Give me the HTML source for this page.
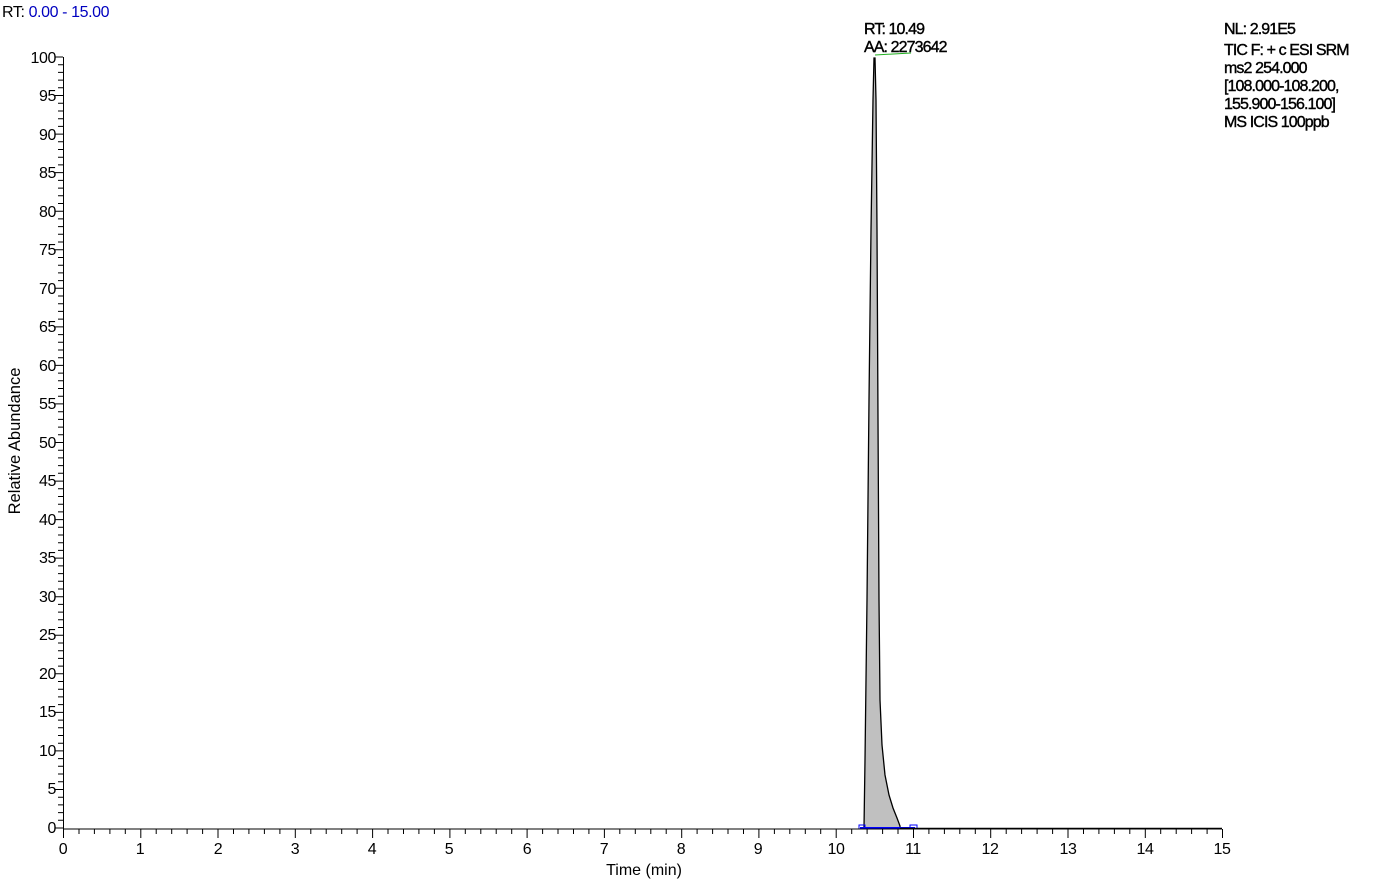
<!DOCTYPE html>
<html><head><meta charset="utf-8"><style>
html,body{margin:0;padding:0;background:#fff;width:1379px;height:886px;overflow:hidden}
svg{display:block}
text{font-family:"Liberation Sans",Arial,sans-serif;font-size:16px;fill:#000}
.c{letter-spacing:-0.4px}
.k{letter-spacing:-0.9px;stroke:#000;stroke-width:0.4px}
</style></head><body>
<svg id="s" width="1379" height="886" viewBox="0 0 1379 886">
<text x="2" y="17" class="c">RT: <tspan fill="#0000c0">0.00 - 15.00</tspan></text>
<text x="864" y="34" class="k">RT: 10.49</text>
<text x="864" y="52" class="k">AA: 2273642</text>
<line x1="875" y1="55" x2="911" y2="53" stroke="#20b020" stroke-width="1"/>
<g class="k">
<text x="1224" y="34">NL: 2.91E5</text>
<text x="1224" y="55">TIC F: + c ESI SRM</text>
<text x="1224" y="73">ms2 254.000</text>
<text x="1224" y="91">[108.000-108.200,</text>
<text x="1224" y="109">155.900-156.100]</text>
<text x="1224" y="127">MS  ICIS 100ppb</text>
</g>
<path d="M864,828 L865,760 L867,600 L869,400 L871,230 L873,100 L874,58 L875,58 L876,100 L877,230 L878,420 L879,600 L880,700 L882,745 L885,775 L889,795 L893,808 L897,818 L900,826 L900,828 Z" fill="#c0c0c0" stroke="#000" stroke-width="1.3"/>
<line x1="860" y1="828" x2="915" y2="828" stroke="#0000ff" stroke-width="2"/>
<rect x="859" y="825" width="6" height="4" fill="none" stroke="#0000ff"/>
<rect x="910" y="825" width="7" height="4" fill="none" stroke="#0000ff"/>
<g id="ax" stroke="#000" stroke-width="1"></g>
<g text-anchor="end" class="c">
<text x="56" y="63">100</text><text x="56" y="101">95</text><text x="56" y="140">90</text><text x="56" y="178">85</text><text x="56" y="217">80</text><text x="56" y="255">75</text><text x="56" y="294">70</text><text x="56" y="332">65</text><text x="56" y="371">60</text><text x="56" y="409">55</text><text x="56" y="448">50</text><text x="56" y="486">45</text><text x="56" y="525">40</text><text x="56" y="563">35</text><text x="56" y="602">30</text><text x="56" y="640">25</text><text x="56" y="679">20</text><text x="56" y="717">15</text><text x="56" y="756">10</text><text x="56" y="794">5</text><text x="56" y="833">0</text>
</g>
<g text-anchor="middle" class="c">
<text x="63" y="854">0</text><text x="140" y="854">1</text><text x="218" y="854">2</text><text x="295" y="854">3</text><text x="372" y="854">4</text><text x="449" y="854">5</text><text x="527" y="854">6</text><text x="604" y="854">7</text><text x="681" y="854">8</text><text x="758" y="854">9</text><text x="836" y="854">10</text><text x="913" y="854">11</text><text x="990" y="854">12</text><text x="1068" y="854">13</text><text x="1145" y="854">14</text><text x="1222" y="854">15</text>
<text x="644" y="875" style="letter-spacing:0">Time (min)</text>
<text transform="translate(20,441) rotate(-90)" style="letter-spacing:0;font-size:16.5px">Relative Abundance</text>
</g>
<line x1="900" y1="828.5" x2="1222" y2="828.5" stroke="#000" stroke-width="1.5"/>
</svg>
<script>
var g=document.getElementById('ax'),d='M63.5,57 V829 H1222 ';
for(var v=0;v<=100;v++){var y=(828-7.71*v).toFixed(1);d+='M'+(v%5?58:55)+','+y+' H63 ';}
for(var i=0;i<=75;i++){var x=(63.5+77.27*i/5).toFixed(1);d+='M'+x+',829 V'+(i%5?834:838)+' ';}
var p=document.createElementNS('http://www.w3.org/2000/svg','path');p.setAttribute('d',d);p.setAttribute('fill','none');g.appendChild(p);
</script>
</body></html>
